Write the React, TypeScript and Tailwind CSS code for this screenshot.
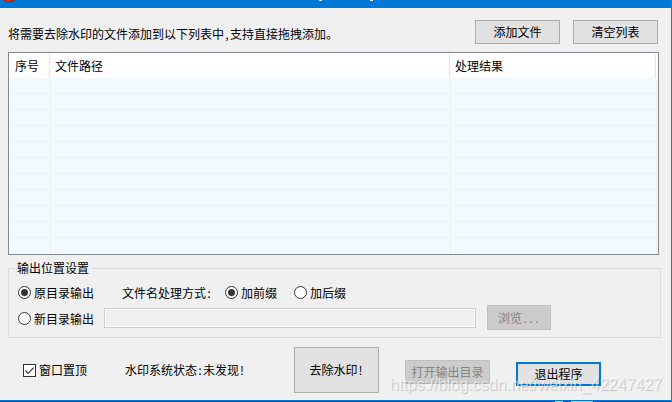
import { useState } from "react";
import type { ButtonHTMLAttributes } from "react";
import { twMerge } from "tailwind-merge";

type OutputMode = "SOURCE" | "CUSTOM";
type AffixMode = "PREFIX" | "SUFFIX";

const EMPTY_ROWS = 11;

function PushButton({
  className,
  ...props
}: ButtonHTMLAttributes<HTMLButtonElement>) {
  return (
    <button
      type="button"
      className={twMerge(
        "h-6 w-[85px] shrink-0 border border-[#adadad] bg-[#e1e1e1] text-black disabled:border-[#bfbfbf] disabled:bg-[#cccccc] disabled:text-[#838383]",
        className,
      )}
      {...props}
    />
  );
}

function Radio({
  label,
  name,
  checked,
  onSelect,
  className,
}: {
  label: string;
  name: string;
  checked: boolean;
  onSelect: () => void;
  className?: string;
}) {
  return (
    <label
      className={twMerge("flex shrink-0 items-center gap-[3px]", className)}
    >
      <input
        type="radio"
        name={name}
        checked={checked}
        onChange={onSelect}
        className="grid size-[13px] appearance-none place-items-center rounded-full border border-[#333333] bg-white before:size-[7px] before:rounded-full checked:before:bg-[#333333]"
      />
      {label}
    </label>
  );
}

function FileTable() {
  const columns = [
    { title: "序号", width: "w-[42px]", padding: "pl-[6px]" },
    { title: "文件路径", width: "w-[400px]", padding: "pl-1" },
    { title: "处理结果", width: "", padding: "pl-1" },
  ];

  return (
    <div className="border border-[#828790] bg-[#f3faff] pr-px">
      <table className="w-full table-fixed border-separate border-spacing-0">
        <thead>
          <tr className="h-[25px] bg-white">
            {columns.map(({ title, width, padding }) => (
              <th
                key={title}
                className={twMerge("p-0 pr-px text-left font-normal", width)}
              >
                <div
                  className={twMerge(
                    "mt-px h-6 border-r border-[#e5e5e5] leading-6",
                    padding,
                  )}
                >
                  {title}
                </div>
              </th>
            ))}
          </tr>
        </thead>
        <tbody>
          {Array.from({ length: EMPTY_ROWS }, (_, row) => (
            <tr key={row} className="group h-4">
              {columns.map(({ title }) => (
                <td
                  key={title}
                  className="border-r border-b border-[#f0f0f0] p-0 group-last:border-b-0"
                />
              ))}
            </tr>
          ))}
        </tbody>
      </table>
    </div>
  );
}

export default function App() {
  const [outputMode, setOutputMode] = useState<OutputMode>("SOURCE");
  const [affixMode, setAffixMode] = useState<AffixMode>("PREFIX");
  const [onTop, setOnTop] = useState(true);
  const [directory, setDirectory] = useState("");

  const isSource = outputMode === "SOURCE";

  return (
    <div className="relative w-full overflow-hidden border-r border-r-[#1979ca] bg-[#f0f0f0] font-['Noto_Sans_Mono_CJK_SC','Noto_Sans_CJK_SC',sans-serif] text-[12px] leading-4 whitespace-nowrap text-black">
      <header className="flex h-2 items-start bg-[#0078d7]">
        <svg width="18" height="2" viewBox="0 0 18 2" aria-hidden="true">
          <path d="M3 0h12l-2 2H5z" fill="#b3200e" />
          <path d="M6 0h5v1H6z" fill="#e33a16" />
        </svg>
        <svg
          className="ml-[301px]"
          width="56"
          height="1"
          viewBox="0 0 56 1"
          aria-hidden="true"
        >
          <path d="M0 0h3v1H0zM51 0h3v1h-3z" fill="#e8f4ff" />
        </svg>
      </header>

      <main className="pr-3 pb-[7px] pl-2">
        <div className="flex items-center pt-3 pb-2">
          <p className="mt-1">
            将需要去除水印的文件添加到以下列表中,支持直接拖拽添加。
          </p>
          <div className="ml-auto flex gap-[13px] pr-px">
            <PushButton>添加文件</PushButton>
            <PushButton>清空列表</PushButton>
          </div>
        </div>

        <FileTable />

        <fieldset className="mt-[5px] -mr-0.5 border border-[#dcdcdc] pl-[6px]">
          <legend className="px-0.5">输出位置设置</legend>
          <div className="flex h-[29px] items-center pt-1">
            <Radio
              className="ml-[3px]"
              label="原目录输出"
              name="output"
              checked={isSource}
              onSelect={() => setOutputMode("SOURCE")}
            />
            <span className="ml-7">文件名处理方式:</span>
            <Radio
              className="ml-[13px]"
              label="加前缀"
              name="affix"
              checked={affixMode === "PREFIX"}
              onSelect={() => setAffixMode("PREFIX")}
            />
            <Radio
              className="ml-[17px]"
              label="加后缀"
              name="affix"
              checked={affixMode === "SUFFIX"}
              onSelect={() => setAffixMode("SUFFIX")}
            />
          </div>
          <div className="flex items-center pb-[7px]">
            <Radio
              className="mt-0.5 ml-[3px]"
              label="新目录输出"
              name="output"
              checked={!isSource}
              onSelect={() => setOutputMode("CUSTOM")}
            />
            <input
              type="text"
              aria-label="新目录"
              disabled={isSource}
              value={directory}
              onChange={({ target }) => setDirectory(target.value)}
              className="ml-[10px] h-5 min-w-0 flex-1 border border-[#cccccc] bg-[#f0f0f0] px-1 inset-ring inset-ring-white"
            />
            <PushButton
              className="mr-[109px] ml-[11px] h-[25px] w-16"
              disabled={isSource}
            >
              浏览...
            </PushButton>
          </div>
        </fieldset>

        <div className="mt-[9px] flex items-center">
          <label className="ml-[15px] flex items-center gap-[3px]">
            <span className="grid">
              <input
                type="checkbox"
                checked={onTop}
                onChange={({ target }) => setOnTop(target.checked)}
                className="peer col-start-1 row-start-1 size-[13px] appearance-none border border-[#333333] bg-white"
              />
              <svg
                className="pointer-events-none invisible col-start-1 row-start-1 peer-checked:visible"
                width="13"
                height="13"
                viewBox="0 0 13 13"
                fill="none"
                stroke="#333333"
                strokeWidth="1.2"
                aria-hidden="true"
              >
                <path d="M2.5 6.5l2.7 2.8 5.4-5.6" />
              </svg>
            </span>
            窗口置顶
          </label>
          <p className="ml-[38px]">水印系统状态:未发现!</p>
          <PushButton className="ml-auto h-[46px]">去除水印!</PushButton>
          <PushButton className="mt-1 ml-[26px]" disabled>
            打开输出目录
          </PushButton>
          <PushButton className="mt-2 mr-[58px] ml-[26px] border-2 border-[#0078d7]">
            退出程序
          </PushButton>
        </div>
      </main>

      <footer className="flex h-0.5 items-end justify-end border-t border-[#0078d7] bg-[#0a4f8c] pr-[76px]">
        <svg width="40" height="1" viewBox="0 0 40 1" aria-hidden="true">
          <path d="M0 0h8v1H0zM16 0h22v1H16z" fill="#a9cfe8" />
        </svg>
      </footer>

      <p className="pointer-events-none absolute right-[9px] bottom-[5px] font-['Liberation_Sans',Arial,sans-serif] text-[16px] leading-6 text-white/60 [text-shadow:1px_1px_1px_rgba(0,0,0,0.2)]">
        https://blog.csdn.net/weixin_42247427
      </p>
    </div>
  );
}
